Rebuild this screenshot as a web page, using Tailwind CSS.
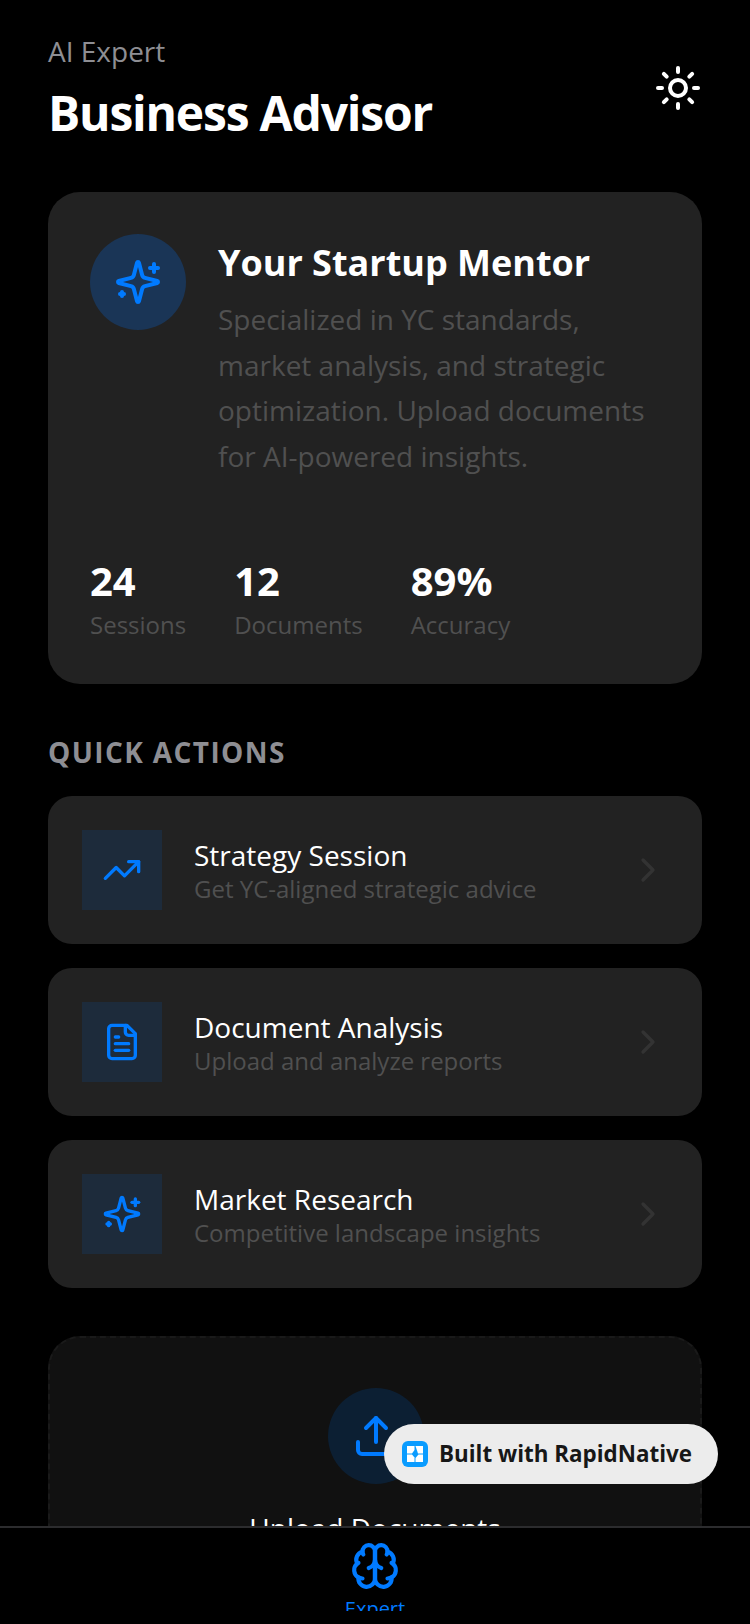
<!DOCTYPE html>
<html lang="en">
<head>
    <meta charset="UTF-8">
    <meta name="viewport" content="width=device-width, initial-scale=1.0">
    <title>Business Advisor</title>
    <script src="https://cdn.jsdelivr.net/npm/@tailwindcss/browser@4"></script>
</head>
<body class="bg-black text-white font-['Open_Sans',sans-serif]">
    <div class="relative w-[750px] h-[1624px] overflow-hidden flex flex-col bg-black">
        <main class="flex-1 overflow-hidden px-[48px]">
            <header class="flex justify-between items-start pt-[31px] h-[192px]">
                <div>
                    <p class="text-[28px] leading-[40px] text-[#8e8e93]">AI Expert</p>
                    <h1 class="text-[48px] leading-[64px] font-bold mt-[10px] tracking-[-1.2px]">Business Advisor</h1>
                </div>
                <button class="mt-[33px]">
                    <svg width="48" height="48" viewBox="0 0 24 24" fill="none" stroke="#fff" stroke-width="2" stroke-linecap="round" stroke-linejoin="round"><circle cx="12" cy="12" r="4"/><path d="M12 2v2"/><path d="M12 20v2"/><path d="m4.93 4.93 1.41 1.41"/><path d="m17.66 17.66 1.41 1.41"/><path d="M2 12h2"/><path d="M20 12h2"/><path d="m6.34 17.66-1.41 1.41"/><path d="m19.07 4.93-1.41 1.41"/></svg>
                </button>
            </header>

            <section class="bg-[#222222] rounded-[32px] h-[492px] p-[42px] flex flex-col">
                <div class="flex gap-[32px]">
                    <div class="w-[96px] h-[96px] rounded-full bg-[#1a3556] flex items-center justify-center shrink-0">
                        <svg width="48" height="48" viewBox="0 0 24 24" fill="none" stroke="#007AFF" stroke-width="2" stroke-linecap="round" stroke-linejoin="round"><path d="M9.937 15.5A2 2 0 0 0 8.5 14.063l-6.135-1.582a.5.5 0 0 1 0-.962L8.5 9.936A2 2 0 0 0 9.937 8.5l1.582-6.135a.5.5 0 0 1 .963 0L14.063 8.5A2 2 0 0 0 15.5 9.937l6.135 1.581a.5.5 0 0 1 0 .964L15.5 14.063a2 2 0 0 0-1.437 1.437l-1.582 6.135a.5.5 0 0 1-.963 0z"/><path d="M20 3v4"/><path d="M22 5h-4"/><path d="M4 17v2"/><path d="M5 18H3"/></svg>
                    </div>
                    <div class="pt-[7px]">
                        <h2 class="text-[36px] leading-[44px] font-bold">Your Startup Mentor</h2>
                        <p class="mt-[12px] text-[28px] leading-[45.6px] text-[#505050]">Specialized in YC standards, market analysis, and strategic optimization. Upload documents for AI-powered insights.</p>
                    </div>
                </div>
                <div class="mt-auto flex gap-[48px] translate-y-[1px]">
                    <div>
                        <p class="text-[40px] leading-[52px] font-bold">24</p>
                        <p class="text-[24px] leading-[36px] text-[#505050]">Sessions</p>
                    </div>
                    <div>
                        <p class="text-[40px] leading-[52px] font-bold">12</p>
                        <p class="text-[24px] leading-[36px] text-[#505050]">Documents</p>
                    </div>
                    <div>
                        <p class="text-[40px] leading-[52px] font-bold">89%</p>
                        <p class="text-[24px] leading-[36px] text-[#505050]">Accuracy</p>
                    </div>
                </div>
            </section>

            <h3 class="mt-[48px] text-[28px] leading-[40px] font-bold tracking-[1.4px] text-[#8e8e93]">QUICK ACTIONS</h3>

            <div class="mt-[24px] flex flex-col gap-[24px]">
                <div class="bg-[#222222] rounded-[24px] h-[148px] px-[34px] flex items-center">
                    <div class="w-[80px] h-[80px] bg-[#1d2b3b] flex items-center justify-center shrink-0">
                        <svg width="40" height="40" viewBox="0 0 24 24" fill="none" stroke="#007AFF" stroke-width="2" stroke-linecap="round" stroke-linejoin="round"><path d="M22 7 13.5 15.5 8.5 10.5 2 17"/><path d="M16 7h6v6"/></svg>
                    </div>
                    <div class="ml-[32px] flex-1 pt-[2px]">
                        <p class="text-[28px] leading-[36px]">Strategy Session</p>
                        <p class="text-[24px] leading-[32px] text-[#505050]">Get YC-aligned strategic advice</p>
                    </div>
                    <svg width="40" height="40" viewBox="0 0 24 24" fill="none" stroke="#333333" stroke-width="2" stroke-linecap="round" stroke-linejoin="round"><path d="m9 18 6-6-6-6"/></svg>
                </div>
                <div class="bg-[#222222] rounded-[24px] h-[148px] px-[34px] flex items-center">
                    <div class="w-[80px] h-[80px] bg-[#1d2b3b] flex items-center justify-center shrink-0">
                        <svg width="40" height="40" viewBox="0 0 24 24" fill="none" stroke="#007AFF" stroke-width="2" stroke-linecap="round" stroke-linejoin="round"><path d="M15 2H6a2 2 0 0 0-2 2v16a2 2 0 0 0 2 2h12a2 2 0 0 0 2-2V7Z"/><path d="M14 2v4a2 2 0 0 0 2 2h4"/><path d="M10 9H8"/><path d="M16 13H8"/><path d="M16 17H8"/></svg>
                    </div>
                    <div class="ml-[32px] flex-1 pt-[2px]">
                        <p class="text-[28px] leading-[36px]">Document Analysis</p>
                        <p class="text-[24px] leading-[32px] text-[#505050]">Upload and analyze reports</p>
                    </div>
                    <svg width="40" height="40" viewBox="0 0 24 24" fill="none" stroke="#333333" stroke-width="2" stroke-linecap="round" stroke-linejoin="round"><path d="m9 18 6-6-6-6"/></svg>
                </div>
                <div class="bg-[#222222] rounded-[24px] h-[148px] px-[34px] flex items-center">
                    <div class="w-[80px] h-[80px] bg-[#1d2b3b] flex items-center justify-center shrink-0">
                        <svg width="40" height="40" viewBox="0 0 24 24" fill="none" stroke="#007AFF" stroke-width="2" stroke-linecap="round" stroke-linejoin="round"><path d="M9.937 15.5A2 2 0 0 0 8.5 14.063l-6.135-1.582a.5.5 0 0 1 0-.962L8.5 9.936A2 2 0 0 0 9.937 8.5l1.582-6.135a.5.5 0 0 1 .963 0L14.063 8.5A2 2 0 0 0 15.5 9.937l6.135 1.581a.5.5 0 0 1 0 .964L15.5 14.063a2 2 0 0 0-1.437 1.437l-1.582 6.135a.5.5 0 0 1-.963 0z"/><path d="M20 3v4"/><path d="M22 5h-4"/><path d="M4 17v2"/><path d="M5 18H3"/></svg>
                    </div>
                    <div class="ml-[32px] flex-1 pt-[2px]">
                        <p class="text-[28px] leading-[36px]">Market Research</p>
                        <p class="text-[24px] leading-[32px] text-[#505050]">Competitive landscape insights</p>
                    </div>
                    <svg width="40" height="40" viewBox="0 0 24 24" fill="none" stroke="#333333" stroke-width="2" stroke-linecap="round" stroke-linejoin="round"><path d="m9 18 6-6-6-6"/></svg>
                </div>
            </div>

            <section class="mt-[48px] bg-[#111111] border-2 border-dashed border-[#1a1a1a] rounded-[32px] h-[300px] pt-[50px] flex flex-col items-center">
                <div class="w-[96px] h-[96px] rounded-full bg-[#0c1f33] flex items-center justify-center translate-x-[1px]">
                    <svg width="48" height="48" viewBox="0 0 24 24" fill="none" stroke="#007AFF" stroke-width="2" stroke-linecap="round" stroke-linejoin="round"><path d="M21 15v4a2 2 0 0 1-2 2H5a2 2 0 0 1-2-2v-4"/><path d="M17 8 12 3 7 8"/><path d="M12 3v12"/></svg>
                </div>
                <p class="mt-[24px] text-[28px] leading-[40px]">Upload Documents</p>
            </section>
        </main>

        <nav class="h-[98px] shrink-0 bg-black border-t-2 border-[#2c2c2e] overflow-hidden flex flex-col items-center pt-[13px]">
            <svg class="shrink-0" width="50" height="50" viewBox="0 0 24 24" fill="none" stroke="#007AFF" stroke-width="2" stroke-linecap="round" stroke-linejoin="round"><path d="M12 5a3 3 0 1 0-5.997.125 4 4 0 0 0-2.526 5.77 4 4 0 0 0 .556 6.588A4 4 0 1 0 12 18Z"/><path d="M12 5a3 3 0 1 1 5.997.125 4 4 0 0 1 2.526 5.77 4 4 0 0 1-.556 6.588A4 4 0 1 1 12 18Z"/><path d="M15 13a4.5 4.5 0 0 1-3-4 4.5 4.5 0 0 1-3 4"/><path d="M12 5v13"/><path d="M17.599 6.5a3 3 0 0 0 .399-1.375"/><path d="M6.003 5.125A3 3 0 0 0 6.401 6.5"/><path d="M3.477 10.896a4 4 0 0 1 .585-.396"/><path d="M19.938 10.5a4 4 0 0 1 .585.396"/><path d="M6 18a4 4 0 0 1-1.967-.516"/><path d="M19.967 17.484A4 4 0 0 1 18 18"/></svg>
            <div class="h-[16px] overflow-hidden mt-[4px] shrink-0">
                <p class="text-[20px] leading-[28px] text-[#007AFF]">Expert</p>
            </div>
        </nav>

        <div class="absolute left-[384px] top-[1424px] w-[334px] h-[60px] rounded-full bg-[#ececec] flex items-center pl-[18px]">
            <div class="w-[26px] h-[26px] rounded-[6px] bg-[#0a9cff] flex items-center justify-center">
                <svg width="18" height="18" viewBox="0 0 18 18" fill="#fff"><path d="M1 1h7.5v4L6 8.5H1z"/><path d="M9.5 1H17v7.5h-5z"/><path d="M1 9.5h5l2.5 3V17H1z"/><path d="M9.5 13l3-3.500H17V17H9.500z"/></svg>
            </div>
            <span class="ml-[11px] text-[22.4px] font-bold text-[#171717]">Built with RapidNative</span>
        </div>
    </div>
</body>
</html>
